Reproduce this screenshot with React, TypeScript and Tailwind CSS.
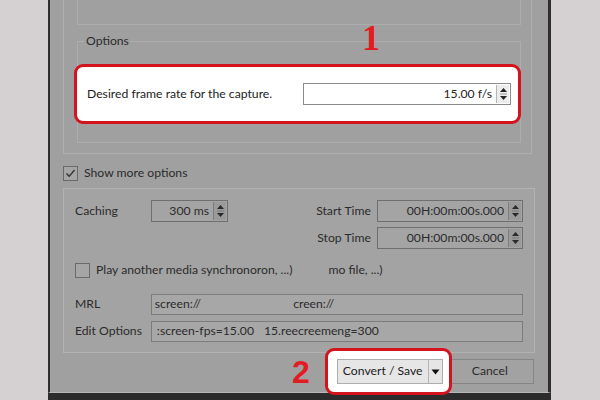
import React from "react";

const font = { fontFamily: "Lato, 'Liberation Sans', sans-serif" };

function Arrows({ light = false }: { light?: boolean }) {
  return (
    <div
      className={`flex h-full w-[13px] flex-col items-center justify-center border-l ${
        light ? "border-[#b5b5b5] bg-[#ececec]" : "border-[#7d7d7d] bg-[#9a9a9a]"
      }`}
    >
      <svg width="9" height="16" viewBox="0 0 9 16">
        <path d="M1 6 L4.5 2 L8 6 Z" fill={light ? "#222" : "#2a2a2a"} />
        <line x1="1" y1="8" x2="8" y2="8" stroke={light ? "#9a9a9a" : "#7a7a7a"} strokeWidth="1" />
        <path d="M1 10 L8 10 L4.5 14 Z" fill={light ? "#222" : "#2a2a2a"} />
      </svg>
    </div>
  );
}

function Spin({ value, w }: { value: string; w: string }) {
  return (
    <div className={`flex h-[22px] ${w} items-stretch border border-[#6f6f6f] bg-[#a4a4a4] p-[1px]`}>
      <div className="flex flex-1 items-center justify-end whitespace-nowrap pr-[4px] text-[#2b2b2b]">{value}</div>
      <Arrows />
    </div>
  );
}

function Check({ checked }: { checked?: boolean }) {
  return (
    <div className="flex h-[15px] w-[15px] shrink-0 items-center justify-center border border-[#6a6a6a] bg-[#a5a5a5]">
      {checked && (
        <svg width="11" height="11" viewBox="0 0 11 11">
          <path d="M1.5 5.5 L4.2 8.3 L9.5 2" stroke="#2f2f2f" strokeWidth="1.3" fill="none" />
        </svg>
      )}
    </div>
  );
}

export default function App() {
  return (
    <div className="flex h-[400px] w-[600px] overflow-hidden whitespace-nowrap bg-[#d5d1d2] text-[12.2px]" style={font}>
      <div className="w-[48px] shrink-0" />
      <div className="flex w-[503px] shrink-0 flex-col">
        <div className="relative flex h-[393px] flex-col border-b border-l-2 border-r-[3px] border-[#2e2e2e] border-b-[#b9b9b9] bg-[#a0a0a0] text-[#2b2b2b]">
          {/* tab pane */}
          <div className="ml-[13px] flex h-[154px] w-[469px] flex-col border border-t-0 border-[#b0b0b0] pl-[13px] pr-[10px]">
            <div className="h-[25px] border border-t-0 border-[#adadad]" />
            <div className="relative mt-[16px] flex h-[102px] flex-col border border-[#adadad] pt-[22px]">
              <span className="absolute left-[6px] top-[-9px] bg-[#a0a0a0] px-[2px] leading-[16px]">Options</span>
              <div className="-ml-[4px] -mr-[1px] flex h-[60px] items-center justify-between rounded-[9px] border-[3px] border-[#d3131d] bg-white pl-[10px] pr-[7px] text-[#222]">
                <span>Desired frame rate for the capture.</span>
                <div className="flex h-[22px] w-[208px] items-stretch border border-[#8a8a8a] bg-white p-[1px]">
                  <div className="flex flex-1 items-center justify-end pr-[4px]">15.00 f/s</div>
                  <Arrows light />
                </div>
              </div>
            </div>
          </div>
          <span
            className="absolute left-[312px] top-[20px] text-[36px] font-bold leading-[36px] text-[#e31b23]"
            style={{ fontFamily: "'Liberation Serif', serif" }}
          >
            1
          </span>

          {/* show more options */}
          <div className="ml-[13px] mt-[12px] flex h-[15px] items-center gap-[6px]">
            <Check checked />
            <span>Show more options</span>
          </div>

          {/* frame */}
          <div className="ml-[13px] mt-[7px] flex h-[165px] w-[472px] flex-col border border-[#b2b2b2] bg-[#a3a3a3] px-[11px] pt-[11px]">
            <div className="flex h-[22px] items-center">
              <span className="w-[76px]">Caching</span>
              <Spin value="300 ms" w="w-[77px]" />
              <div className="flex-1" />
              <span className="mr-[6px]">Start Time</span>
              <Spin value="00H:00m:00s.000" w="w-[146px]" />
            </div>
            <div className="mt-[5px] flex h-[22px] items-center justify-end">
              <span className="mr-[6px]">Stop Time</span>
              <Spin value="00H:00m:00s.000" w="w-[146px]" />
            </div>
            <div className="mt-[14px] flex h-[15px] items-center">
              <Check />
              <span className="ml-[6px]">Play another media synchronoron, ...)</span>
              <span className="ml-[36px]">mo file, ...)</span>
            </div>
            <div className="mt-[16px] flex h-[21px] items-center">
              <span className="w-[76px]">MRL</span>
              <div className="flex h-[21px] w-[373px] items-center border border-[#7c7c7c] bg-[#a7a7a7] pl-[3px]">
                <span>screen://</span>
                <span className="ml-[92px]">creen://</span>
              </div>
            </div>
            <div className="mt-[6px] flex h-[21px] items-center">
              <span className="w-[76px]">Edit Options</span>
              <div className="flex h-[21px] w-[373px] items-center border border-[#7c7c7c] bg-[#a7a7a7] pl-[5px]">
                <span>:screen-fps=15.00</span>
                <span className="ml-[10px]">15.reecreemeng=300</span>
              </div>
            </div>
          </div>

          {/* buttons */}
          <div className="mt-[6px] flex h-[25px] items-center">
            <div className="w-[242px]" />
            <span
              className="mr-[15px] text-[32px] font-bold leading-[32px] text-[#e31b23]"
              style={{ fontFamily: "'Liberation Sans', sans-serif" }}
            >
              2
            </span>
            <div className="relative z-10 flex h-[47px] w-[127px] items-center rounded-[9px] border-[3px] border-[#d3131d] bg-white pl-[9px]">
              <div className="flex h-[25px] w-[106px] items-center border border-[#adadad] bg-[#e6e6e6] text-[#222]">
                <span className="flex-1 pl-[5px]">Convert / Save</span>
                <div className="flex h-full w-[14px] items-center justify-center border-l border-[#b5b5b5]">
                  <svg width="9" height="6" viewBox="0 0 9 6">
                    <path d="M0.5 0.5 L8.5 0.5 L4.5 5.5 Z" fill="#111" />
                  </svg>
                </div>
              </div>
            </div>
            <div className="-ml-[6px] flex h-[25px] w-[88px] items-center justify-center border border-[#858585] bg-[#a2a2a2]">
              Cancel
            </div>
          </div>
        </div>
        <div className="h-[7px] bg-[#2c2c2c]" />
      </div>
    </div>
  );
}
